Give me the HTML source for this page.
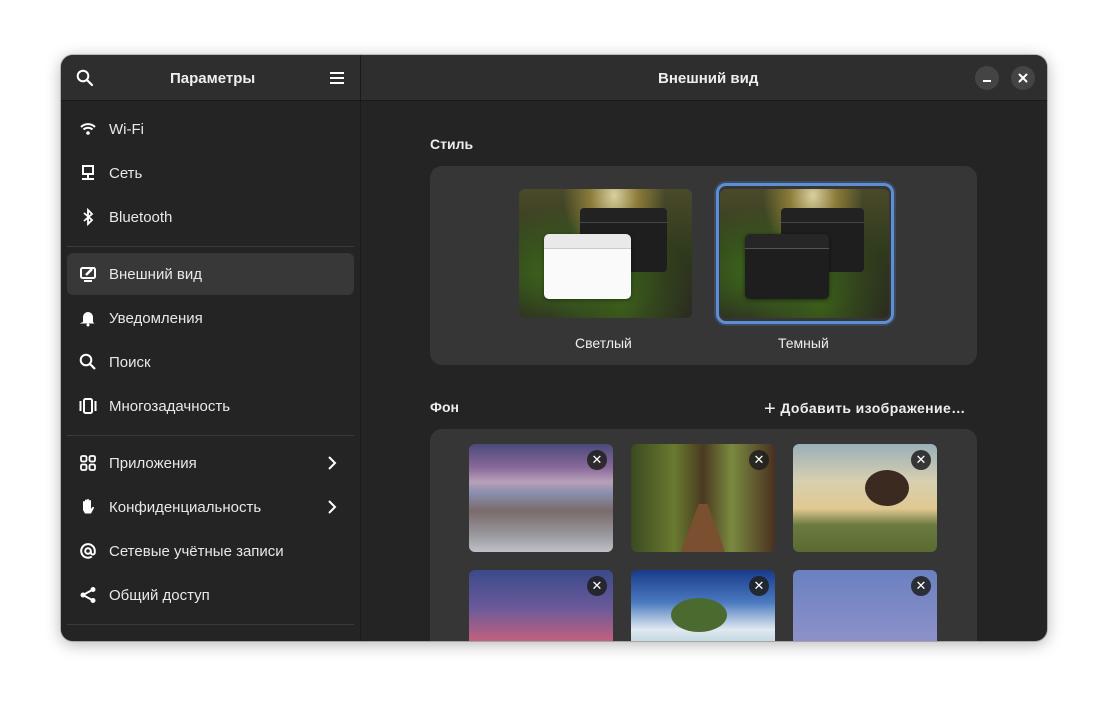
<!DOCTYPE html>
<html><head><meta charset="utf-8"><style>
*{box-sizing:border-box;margin:0;padding:0}
body{width:1108px;height:708px;background:#fff;font-family:"Liberation Sans","DejaVu Sans",sans-serif;color:#fff;position:relative;overflow:hidden}
.win{position:absolute;left:61px;top:55px;width:986px;height:586px;border-radius:12px;overflow:hidden;background:#242424;box-shadow:0 3px 16px rgba(0,0,0,.3),0 0 0 1px rgba(0,0,0,.2)}
.hdr{position:absolute;left:0;top:0;width:986px;height:46px;background:#2e2e2e;border-bottom:1px solid #1a1a1a}
.side{position:absolute;left:0;top:47px;width:299px;height:540px;background:#242424}
.vdiv{position:absolute;left:299px;top:0;width:1px;height:586px;background:#1a1a1a}
.t{position:absolute;font-size:15px;color:#eee;white-space:nowrap}
.b{font-weight:bold}
.item{position:absolute;left:6px;width:287px;height:42px}
.item .ic{position:absolute;left:12px;top:12px;width:18px;height:18px}
.item .lb{position:absolute;left:42px;top:13px;font-size:15px;color:#e8e8e8}
.sep{position:absolute;left:6px;width:287px;height:1px;background:#3a3a3a}
.sel{background:#383838;border-radius:6px}
.card{position:absolute;left:369px;width:547px;background:#363636;border-radius:12px}
.th{position:absolute;width:144px;height:108px;border-radius:6px;overflow:hidden}
.x{position:absolute;right:6px;top:6px;width:20px;height:20px;border-radius:50%;background:rgba(30,30,30,.85);color:#fff;font-size:13px;font-weight:bold;text-align:center;line-height:20px}
.cb{position:absolute;top:11px;width:24px;height:24px;border-radius:50%;background:#444}
</style></head><body>
<div class="win">
<div class="hdr"></div>
<div class="side"></div>
<div class="vdiv"></div>
<svg style="position:absolute;left:15px;top:14px" width="18" height="18" viewBox="0 0 18 18"><circle cx="7" cy="7" r="5.3" fill="none" stroke="#fff" stroke-width="2"/><path d="M11 11l5 5" stroke="#fff" stroke-width="2.2" stroke-linecap="round"/></svg>
<div class="t b" style="left:109px;top:15px">Параметры</div>
<svg style="position:absolute;left:268px;top:16px" width="16" height="14"><path d="M1 2h14M1 7h14M1 12h14" stroke="#fff" stroke-width="2"/></svg>
<div class="t b" style="left:597px;top:15px">Внешний вид</div>
<div class="cb" style="left:914px"><div style="position:absolute;left:8px;top:14px;width:8px;height:2px;background:#fff"></div></div>
<div class="cb" style="left:950px"><svg width="24" height="24"><path d="M8.5 8.5l7 7M15.5 8.5l-7 7" stroke="#fff" stroke-width="2" stroke-linecap="round"/></svg></div>

<div class="item" style="top:53px"><svg class="ic" viewBox="0 0 18 18"><path d="M2 7a10 10 0 0114 0M4.5 9.5a6.5 6.5 0 019 0" stroke="#fff" stroke-width="2" fill="none"/><circle cx="9" cy="13" r="1.8" fill="#fff"/></svg><div class="lb">Wi-Fi</div></div>
<div class="item" style="top:97px"><svg class="ic" viewBox="0 0 18 18"><rect x="4" y="2" width="10" height="8" fill="none" stroke="#fff" stroke-width="2"/><path d="M9 10v4M3 15h12" stroke="#fff" stroke-width="2"/></svg><div class="lb">Сеть</div></div>
<div class="item" style="top:141px"><svg class="ic" viewBox="0 0 18 18"><path d="M5 5l8 7-4 4V2l4 4-8 7" stroke="#fff" stroke-width="1.8" fill="none"/></svg><div class="lb">Bluetooth</div></div>
<div class="sep" style="top:191px"></div>
<div class="item sel" style="top:198px"><svg class="ic" viewBox="0 0 18 18"><rect x="2" y="3" width="14" height="10" rx="1.5" fill="none" stroke="#fff" stroke-width="2"/><path d="M5 16h8" stroke="#fff" stroke-width="2"/><path d="M7 10l6-6" stroke="#fff" stroke-width="2.5"/></svg><div class="lb">Внешний вид</div></div>
<div class="item" style="top:242px"><svg class="ic" viewBox="0 0 18 18"><path d="M4 13V8a5 5 0 0110 0v5l1.5 1.5h-15z" fill="#fff"/><circle cx="9" cy="16" r="1.5" fill="#fff"/></svg><div class="lb">Уведомления</div></div>
<div class="item" style="top:286px"><svg class="ic" viewBox="0 0 18 18"><circle cx="7" cy="7" r="5.3" fill="none" stroke="#fff" stroke-width="2"/><path d="M11 11l5 5" stroke="#fff" stroke-width="2.2"/></svg><div class="lb">Поиск</div></div>
<div class="item" style="top:330px"><svg class="ic" viewBox="0 0 18 18"><rect x="5" y="2" width="8" height="14" rx="1.5" fill="none" stroke="#fff" stroke-width="2"/><path d="M1.5 4v10M16.5 4v10" stroke="#fff" stroke-width="2"/></svg><div class="lb">Многозадачность</div></div>
<div class="sep" style="top:380px"></div>
<div class="item" style="top:387px"><svg class="ic" viewBox="0 0 18 18"><rect x="2" y="2" width="5.5" height="5.5" rx="1.5" fill="none" stroke="#fff" stroke-width="1.8"/><rect x="10.5" y="2" width="5.5" height="5.5" rx="1.5" fill="none" stroke="#fff" stroke-width="1.8"/><rect x="2" y="10.5" width="5.5" height="5.5" rx="1.5" fill="none" stroke="#fff" stroke-width="1.8"/><rect x="10.5" y="10.5" width="5.5" height="5.5" rx="1.5" fill="none" stroke="#fff" stroke-width="1.8"/></svg><div class="lb">Приложения</div><svg style="position:absolute;left:260px;top:13px" width="10" height="16"><path d="M2 2l6 6-6 6" stroke="#fff" stroke-width="2" fill="none"/></svg></div>
<div class="item" style="top:431px"><svg class="ic" viewBox="0 0 18 18"><path d="M4 9V4a1 1 0 012 0v4V2.5a1 1 0 012 0V8V2a1 1 0 012 0v6V3a1 1 0 012 0v8l1.5-2a1 1 0 011.5 1l-3 5.5H6L4 12z" fill="#fff"/></svg><div class="lb">Конфиденциальность</div><svg style="position:absolute;left:260px;top:13px" width="10" height="16"><path d="M2 2l6 6-6 6" stroke="#fff" stroke-width="2" fill="none"/></svg></div>
<div class="item" style="top:475px"><svg class="ic" viewBox="0 0 18 18"><circle cx="9" cy="9" r="2.8" fill="none" stroke="#fff" stroke-width="2"/><path d="M11.8 9v1.5a2 2 0 004 0V9a6.8 6.8 0 10-3 5.6" fill="none" stroke="#fff" stroke-width="2"/></svg><div class="lb">Сетевые учётные записи</div></div>
<div class="item" style="top:519px"><svg class="ic" viewBox="0 0 18 18"><circle cx="4" cy="9" r="2.5" fill="#fff"/><circle cx="14" cy="3.5" r="2.5" fill="#fff"/><circle cx="14" cy="14.5" r="2.5" fill="#fff"/><path d="M4 9l10-5.5M4 9l10 5.5" stroke="#fff" stroke-width="2"/></svg><div class="lb">Общий доступ</div></div>
<div class="sep" style="top:569px"></div>

<div class="t b" style="left:369px;top:81px;font-size:14px">Стиль</div>
<div class="card" style="top:111px;height:199px"></div>
<div style="position:absolute;left:458px;top:134px;width:173px;height:129px;border-radius:6px;overflow:hidden;background:radial-gradient(ellipse at 55% 5%,#d8d0a0 0,#8a7a38 18%,transparent 38%),radial-gradient(ellipse at 25% 65%,#3e6a1c,transparent 55%),radial-gradient(ellipse at 60% 90%,#3a5a1a,transparent 50%),linear-gradient(180deg,#4a4a2a,#2e3a1c 50%,#2a2622)">
 <div style="position:absolute;left:61px;top:19px;width:87px;height:64px;background:#1e1e1e;border-radius:4px;border-top:14px solid #222"></div>
 <div style="position:absolute;left:61px;top:33px;width:87px;height:1px;background:#444"></div>
 <div style="position:absolute;left:25px;top:45px;width:87px;height:65px;background:#fafafa;border-radius:5px;border-top:14px solid #e9e9e9;box-shadow:0 1px 4px rgba(0,0,0,.4)"></div>
 <div style="position:absolute;left:25px;top:59px;width:87px;height:1px;background:#ccc"></div>
</div>
<div style="position:absolute;left:655px;top:128px;width:178px;height:141px;border-radius:10px;border:3px solid #5d8fd4;box-shadow:0 0 0 2px #3b4a5e"></div>
<div style="position:absolute;left:659px;top:134px;width:169px;height:129px;border-radius:6px;overflow:hidden;background:radial-gradient(ellipse at 55% 5%,#d8d0a0 0,#8a7a38 18%,transparent 38%),radial-gradient(ellipse at 25% 65%,#3e6a1c,transparent 55%),radial-gradient(ellipse at 60% 90%,#3a5a1a,transparent 50%),linear-gradient(180deg,#4a4a2a,#2e3a1c 50%,#2a2622)">
 <div style="position:absolute;left:61px;top:19px;width:83px;height:64px;background:#1e1e1e;border-radius:4px;border-top:14px solid #222"></div>
 <div style="position:absolute;left:61px;top:33px;width:83px;height:1px;background:#444"></div>
 <div style="position:absolute;left:25px;top:45px;width:84px;height:65px;background:#1e1e1e;border-radius:5px;border-top:14px solid #262626;box-shadow:0 1px 4px rgba(0,0,0,.5)"></div>
 <div style="position:absolute;left:25px;top:59px;width:84px;height:1px;background:#555"></div>
</div>
<div class="t" style="left:514px;top:280px;font-size:14px">Светлый</div>
<div class="t" style="left:717px;top:280px;font-size:14px">Темный</div>

<div class="t b" style="left:369px;top:344px;font-size:14px">Фон</div>
<div class="t b" style="left:703px;top:341px;font-size:14px;letter-spacing:.4px"><span style="font-size:20px;font-weight:normal;position:relative;top:2px">+</span> Добавить изображение…</div>
<div class="card" style="top:374px;height:240px"></div>
<div class="th" style="left:408px;top:389px;background:linear-gradient(180deg,#4a4a7a 0,#8a6a9a 22%,#b8a0b8 35%,#8a90b0 45%,#7a6a6a 62%,#9a9aa0 85%,#c0c0c8)"><div class="x">✕</div></div>
<div class="th" style="left:570px;top:389px;background:linear-gradient(90deg,#3a4a20,#6a7a30 30%,#4a3a20 50%,#7a8a40 70%,#4a3020),#4a5a20"><div style="position:absolute;left:50px;top:60px;width:44px;height:48px;background:#7a5030;clip-path:polygon(40% 0,60% 0,100% 100%,0 100%)"></div><div class="x">✕</div></div>
<div class="th" style="left:732px;top:389px;background:linear-gradient(180deg,#9ab0b8 0,#d8d0b0 35%,#e0c890 60%,#6a7a40 75%,#5a6a30)"><div style="position:absolute;left:72px;top:26px;width:44px;height:36px;border-radius:50%;background:#3a2a20"></div><div class="x">✕</div></div>
<div class="th" style="left:408px;top:515px;background:linear-gradient(180deg,#3a4a8a 0,#6a5a9a 35%,#c06080 65%,#e07040)"><div class="x">✕</div></div>
<div class="th" style="left:570px;top:515px;background:linear-gradient(180deg,#1a3a8a 0,#4a7ac0 30%,#e0e8f0 55%,#a0c8d0 80%,#80b0b0)"><div style="position:absolute;left:40px;top:28px;width:56px;height:34px;border-radius:50%;background:#4a6a30"></div><div class="x">✕</div></div>
<div class="th" style="left:732px;top:515px;background:linear-gradient(180deg,#6a80c0,#8a90c8 60%,#9a90b8)"><div class="x">✕</div></div>
</div>
</body></html>
